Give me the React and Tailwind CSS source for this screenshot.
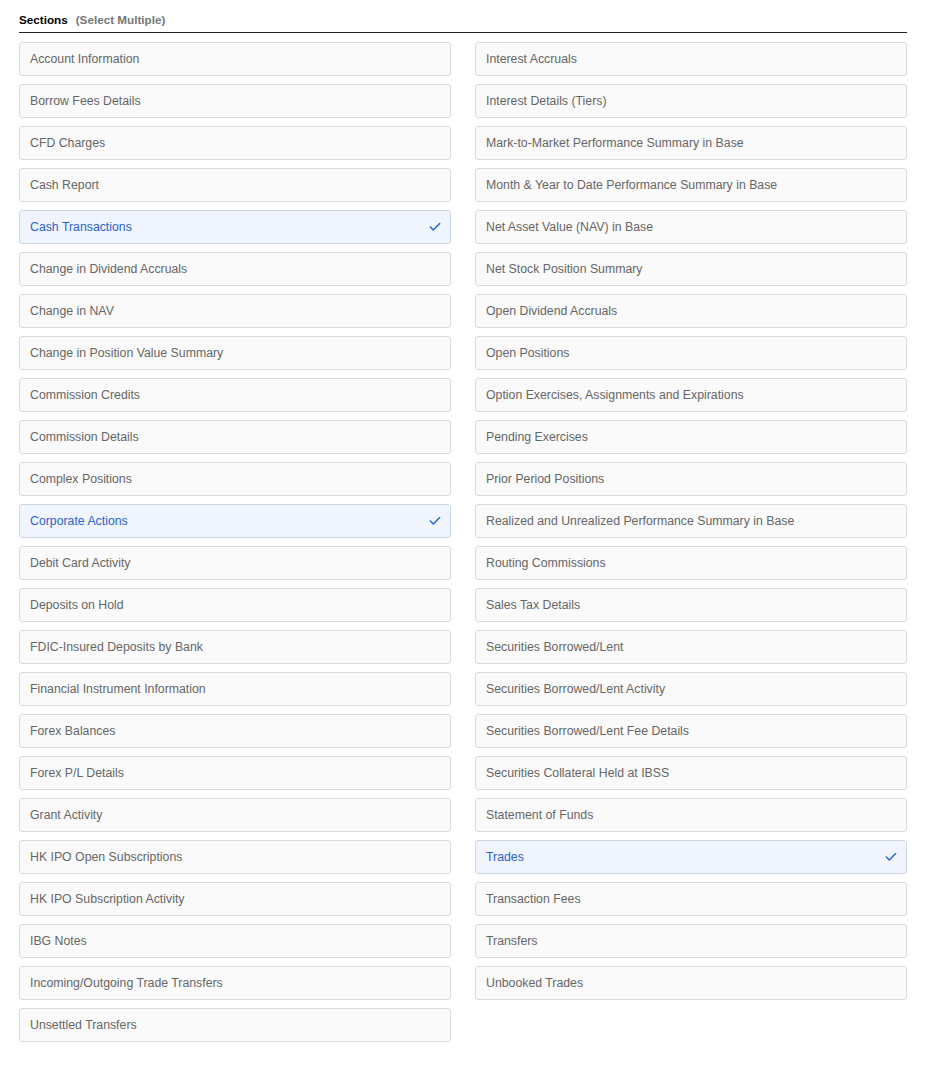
import { Check } from "lucide-react";

const LEFT = [
  "Account Information",
  "Borrow Fees Details",
  "CFD Charges",
  "Cash Report",
  "Cash Transactions",
  "Change in Dividend Accruals",
  "Change in NAV",
  "Change in Position Value Summary",
  "Commission Credits",
  "Commission Details",
  "Complex Positions",
  "Corporate Actions",
  "Debit Card Activity",
  "Deposits on Hold",
  "FDIC-Insured Deposits by Bank",
  "Financial Instrument Information",
  "Forex Balances",
  "Forex P/L Details",
  "Grant Activity",
  "HK IPO Open Subscriptions",
  "HK IPO Subscription Activity",
  "IBG Notes",
  "Incoming/Outgoing Trade Transfers",
  "Unsettled Transfers",
];

const RIGHT = [
  "Interest Accruals",
  "Interest Details (Tiers)",
  "Mark-to-Market Performance Summary in Base",
  "Month & Year to Date Performance Summary in Base",
  "Net Asset Value (NAV) in Base",
  "Net Stock Position Summary",
  "Open Dividend Accruals",
  "Open Positions",
  "Option Exercises, Assignments and Expirations",
  "Pending Exercises",
  "Prior Period Positions",
  "Realized and Unrealized Performance Summary in Base",
  "Routing Commissions",
  "Sales Tax Details",
  "Securities Borrowed/Lent",
  "Securities Borrowed/Lent Activity",
  "Securities Borrowed/Lent Fee Details",
  "Securities Collateral Held at IBSS",
  "Statement of Funds",
  "Trades",
  "Transaction Fees",
  "Transfers",
  "Unbooked Trades",
];

const SELECCIONADOS = ["Cash Transactions", "Corporate Actions", "Trades"];

function Opcion({ texto }) {
  const activo = SELECCIONADOS.includes(texto);
  return (
    <div
      className={`flex h-[34px] items-center justify-between rounded-[3px] border pl-[10px] pr-[8px] text-[12.3px] ${
        activo
          ? "border-[#cdd6e4] bg-[#f0f5fd] text-[#2b63c6]"
          : "border-[#dcdcdc] bg-[#fafafa] text-[#666]"
      }`}
    >
      <span>{texto}</span>
      {activo && <Check size={14} strokeWidth={2.5} className="text-[#2b63c6]" />}
    </div>
  );
}

export default function App() {
  return (
    <main className="min-h-[1067px] bg-white pl-[19px] pr-[31px] pt-[12px] font-['Liberation_Sans',Arial,sans-serif]">
      <div className="border-b border-[#222] pb-[4px] text-[11.7px] leading-[16px] font-bold">
        <span className="text-black">Sections</span>
        <span className="ml-[8px] text-[#777]">(Select Multiple)</span>
      </div>
      <div className="mt-[9px] grid grid-cols-2 gap-x-[24px]">
        <div className="flex flex-col gap-[8px]">
          {LEFT.map((t) => (
            <Opcion key={t} texto={t} />
          ))}
        </div>
        <div className="flex flex-col gap-[8px]">
          {RIGHT.map((t) => (
            <Opcion key={t} texto={t} />
          ))}
        </div>
      </div>
    </main>
  );
}
